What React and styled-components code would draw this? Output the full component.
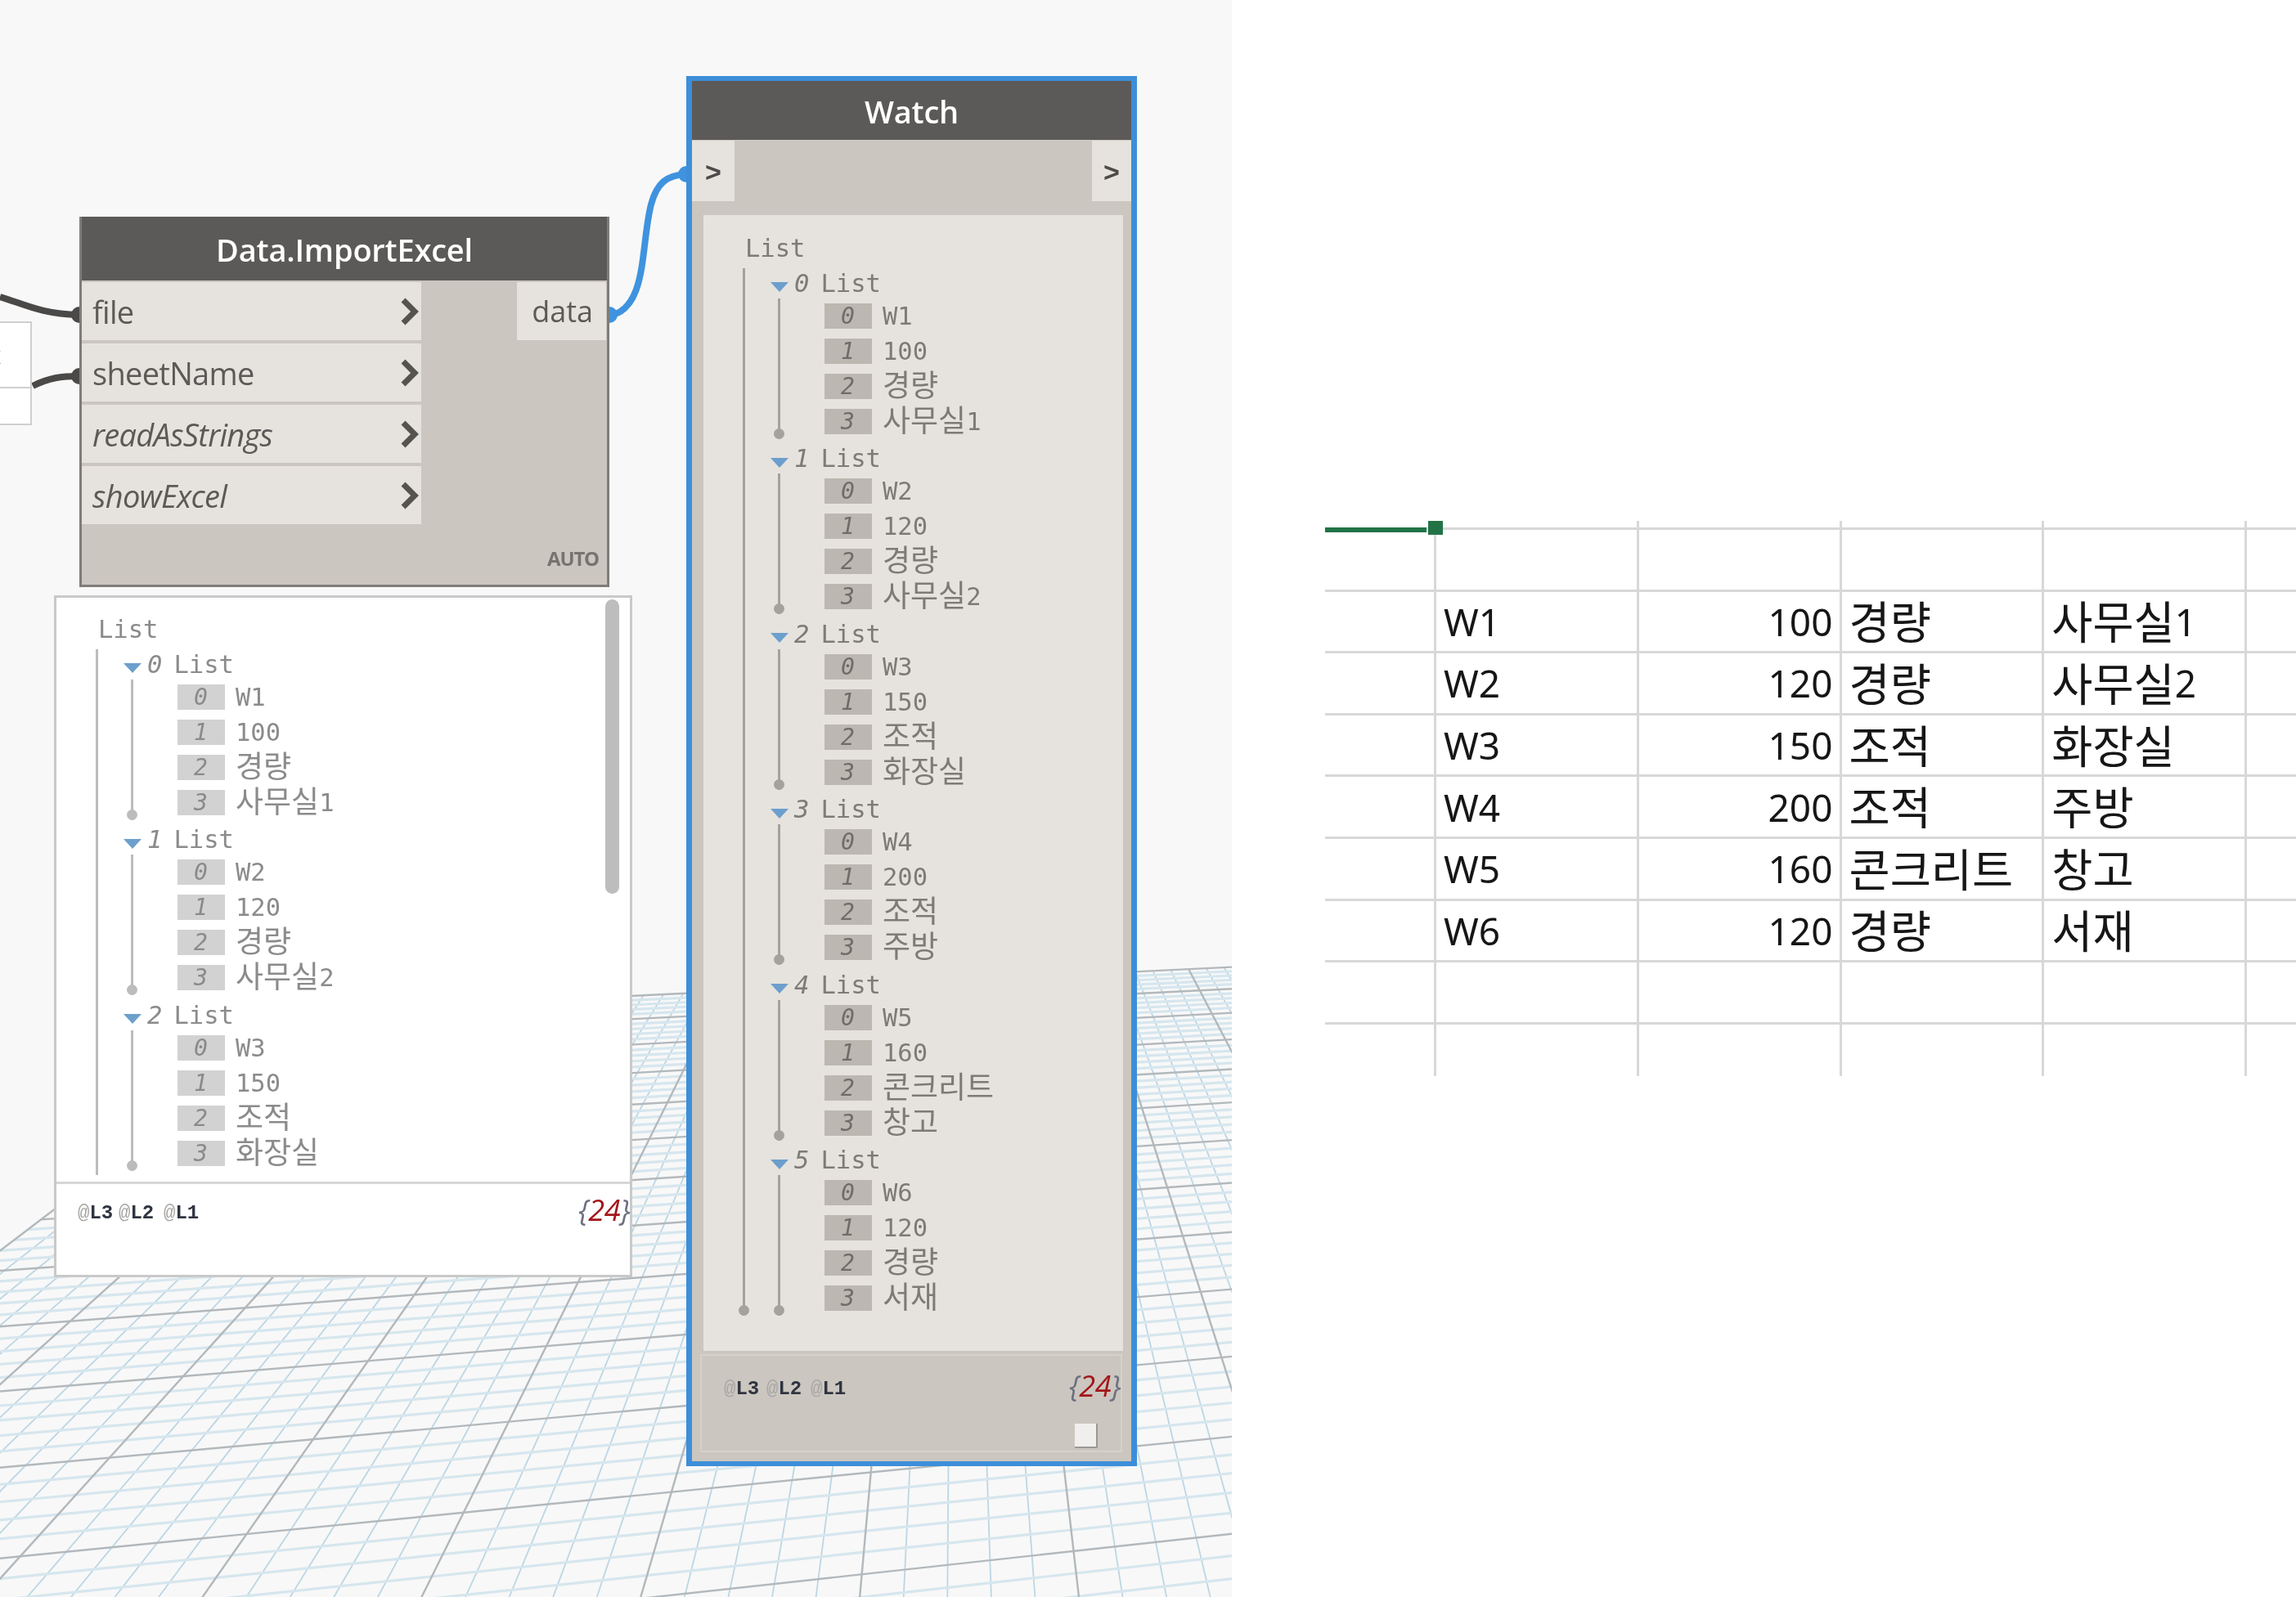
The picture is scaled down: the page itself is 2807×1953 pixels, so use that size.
import React from 'react';
import styled, { createGlobalStyle } from 'styled-components';

const GlobalStyle = createGlobalStyle`
  html, body {
    margin: 0;
    padding: 0;
    background: #ffffff;
  }
`

const RECORDS = [
  ['W1', '100', '경량', '사무실1'],
  ['W2', '120', '경량', '사무실2'],
  ['W3', '150', '조적', '화장실'],
  ['W4', '200', '조적', '주방'],
  ['W5', '160', '콘크리트', '창고'],
  ['W6', '120', '경량', '서재'],
];

// perspective of the Dynamo background grid
const VP_X = 1168;
const HORIZON = 640;
const VP2_X = 12800;

function gridPoint(k, depth) {
  const u = depth * (1 - VP_X / VP2_X) / (1 + k * depth / VP2_X);
  return [VP_X + k * u, HORIZON + u];
}

function buildGridLines() {
  const lines = [];
  for (let j = 0; j <= 50; j++) {
    const k = -1.313 + 0.0408 * j;
    const a = gridPoint(k, 616);
    const b = gridPoint(k, 1800);
    lines.push({ a, b, major: j % 5 === 0, along: true });
  }
  for (let i = -30; i <= 40; i++) {
    const depth = 1 / (0.001018 + 0.0000152 * i);
    const a = gridPoint(-1.313, depth);
    const b = gridPoint(1.3, depth);
    lines.push({ a, b, major: i % 5 === 0, along: false });
  }
  return lines;
}

const GRID_LINES = buildGridLines();

function splitHangul(text) {
  return text.match(/[\uac00-\ud7a3]+|[^\uac00-\ud7a3]+/g).map(part => ({
    text: part,
    hangul: /[\uac00-\ud7a3]/.test(part),
  }));
}

const Page = styled.div`
  display: flex;
  width: 2807px;
  height: 1953px;
  overflow: hidden;
  background: #ffffff;
  filter: blur(0.6px);
`
const Canvas = styled.div`
  position: relative;
  flex: 0 0 1506px;
  height: 1953px;
  overflow: hidden;
  background: #f8f8f8;
`
const Backdrop = styled.svg`
  position: absolute;
  left: 0;
  top: 0;
`

const InputStub = styled.div`
  position: absolute;
  left: -3px;
  top: ${p => p.$top}px;
  width: 42px;
  height: ${p => p.$height}px;
  box-sizing: border-box;
  background: #ffffff;
  border: 2px solid #cfcfcf;
  font: 30px "Open Sans", sans-serif;
  line-height: 78px;
  color: #8fa4b8;
  text-indent: -13px;
  overflow: hidden;
`

const ImportNode = styled.div`
  position: absolute;
  left: 97px;
  top: 265px;
  width: 648px;
  height: 453px;
  box-sizing: border-box;
  display: flex;
  flex-direction: column;
  background: #cbc6bf;
  border: solid #7f7c79;
  border-width: 0 3px 3px 3px;
`
const NodeHeader = styled.div`
  flex: 0 0 ${p => p.$height}px;
  box-sizing: border-box;
  padding-top: 2px;
  display: flex;
  align-items: center;
  justify-content: center;
  background: #5c5a58;
  color: #ffffff;
  font: 600 38px "Open Sans", sans-serif;
  letter-spacing: -0.2px;
`
const PortArea = styled.div`
  display: flex;
  justify-content: space-between;
  padding: 2px 0 0 0;
`
const InputList = styled.div`
  width: 415px;
  display: flex;
  flex-direction: column;
  gap: 4px;
`
const InputRow = styled.div`
  height: 71px;
  display: flex;
  align-items: center;
  justify-content: space-between;
  padding: 0 1px 0 13px;
  background: #e6e3de;
  color: #5b5a58;
  font: ${p => (p.$optional ? 'italic' : 'normal')} 38px "Open Sans", sans-serif;
  letter-spacing: -0.7px;
`
const OutputPill = styled.div`
  width: 109px;
  height: 71px;
  box-sizing: border-box;
  display: flex;
  align-items: center;
  justify-content: flex-end;
  margin-right: 1px;
  padding-right: 16px;
  background: #e6e3de;
  color: #5b5a58;
  font: 36px "Open Sans", sans-serif;
`
const AutoLabel = styled.div`
  align-self: flex-end;
  margin: 25px 10px 0 0;
  color: #77736f;
  font: 700 24px "Open Sans", sans-serif;
  letter-spacing: -1.2px;
`

const WatchNode = styled.div`
  position: absolute;
  left: 839px;
  top: 93px;
  width: 551px;
  height: 1700px;
  box-sizing: border-box;
  display: flex;
  flex-direction: column;
  background: #cbc6bf;
  border: 7px solid #3d8ed9;
  border-top-width: 6px;
  border-bottom-width: 6px;
`
const WatchPorts = styled.div`
  display: flex;
  justify-content: space-between;
  margin-top: 1px;
`
const PortTab = styled.div`
  width: ${p => p.$width}px;
  height: 74px;
  box-sizing: border-box;
  padding-top: 8px;
  display: flex;
  align-items: center;
  justify-content: center;
  background: #e6e3de;
  color: #4d4b49;
  font: 600 34px "Liberation Mono", monospace;
`
const WatchPanel = styled.div`
  margin: 17px 10px 0 14px;
  flex: 0 0 1389px;
  box-sizing: border-box;
  padding: 22px 0 0 48px;
  background: #e6e3de;
`
const WatchFooter = styled.div`
  flex: 1;
  margin: 4px 11px 11px 10px;
  box-sizing: border-box;
  display: flex;
  flex-direction: column;
  border: 2px solid #d6d2cb;
`
const ToggleBox = styled.div`
  align-self: flex-end;
  width: 28px;
  height: 30px;
  margin: 20px 28px 0 0;
  background: #f0efed;
  border-right: 2px solid #9a9894;
  border-bottom: 2px solid #9a9894;
  box-sizing: border-box;
`

const PreviewBubble = styled.div`
  position: absolute;
  left: 66px;
  top: 728px;
  width: 707px;
  height: 834px;
  box-sizing: border-box;
  display: flex;
  flex-direction: column;
  background: #ffffff;
  border: 3px solid #c9c9c9;
`
const PreviewScroller = styled.div`
  position: relative;
  height: 706px;
  margin-bottom: 8px;
  overflow: hidden;
  box-sizing: border-box;
  padding: 20px 0 0 48px;
`
const ScrollThumb = styled.div`
  position: absolute;
  left: 671px;
  top: 2px;
  width: 17px;
  height: 360px;
  border-radius: 9px;
  background: #bdbdbd;
`
const PreviewFooter = styled.div`
  flex: 1;
  border-top: 3px solid #d6d6d6;
`

const SummaryRow = styled.div`
  display: flex;
  align-items: center;
  justify-content: space-between;
  height: 46px;
  margin-top: ${p => p.$top}px;
  padding: 0 0 0 ${p => p.$left}px;
`
const Levels = styled.div`
  display: flex;
`
const Level = styled.span`
  width: ${p => p.$width}px;
  font: 700 24px "Liberation Mono", monospace;
  color: #2f3440;
`
const LevelAt = styled.span`
  font-weight: 400;
  color: #a9a7a5;
`
const Count = styled.span`
  font: italic 36px "Open Sans", sans-serif;
  color: #6d7180;
  letter-spacing: -0.5px;
  position: relative;
  top: -4px;
`
const CountValue = styled.span`
  color: #a3161a;
`

const RootLabel = styled.div`
  height: 38px;
  margin-left: 3px;
  font: 30.5px/38px "DejaVu Sans Mono", monospace;
  color: ${p => p.$ink};
`
const Branch = styled.div`
  position: relative;
  border-left: 3px solid ${p => p.$line};
  box-sizing: border-box;
  padding-bottom: ${p => (p.$open ? 5 : 0)}px;
  &::after {
    content: "";
    display: ${p => (p.$open ? 'none' : 'block')};
    position: absolute;
    left: -8px;
    bottom: 0;
    width: 13px;
    height: 13px;
    border-radius: 50%;
    background: ${p => p.$line};
  }
`
const Group = styled.div`
  margin: 4.5px 0 0 0;
  & + & {
    margin-top: 5.5px;
  }
`
const GroupHead = styled.div`
  height: 37px;
  display: flex;
  align-items: center;
  padding-left: 31px;
  font: 30.5px/37px "DejaVu Sans Mono", monospace;
  color: ${p => p.$ink};
`
const Caret = styled.span`
  width: 0;
  height: 0;
  margin: 10px 7px 0 0;
  border-left: 11.5px solid transparent;
  border-right: 11.5px solid transparent;
  border-top: 12px solid #6d9fcd;
`
const GroupIndex = styled.span`
  width: 32.5px;
  font-style: italic;
`
const ItemList = styled(Branch)`
  margin-left: 39.5px;
  padding-left: 54px;
`
const Item = styled.div`
  height: 43px;
  display: flex;
  align-items: center;
  font: 30.5px/43px "DejaVu Sans Mono", monospace;
  color: ${p => p.$ink};
`
const ItemIndex = styled.span`
  width: 58px;
  height: 31px;
  margin-right: 13.5px;
  display: flex;
  align-items: center;
  justify-content: center;
  background: ${p => p.$fill};
  font-style: italic;
  font-size: 28px;
  color: ${p => p.$ink};
`
const TreeHangul = styled.span`
  font: 37px/43px "Noto Sans CJK KR", sans-serif;
  position: relative;
  top: -3px;
`

const Sheet = styled.div`
  position: relative;
  flex: 1;
  padding: 637px 0 0 114px;
`
const SheetGrid = styled.div`
  display: grid;
  grid-template-columns: 136px repeat(4, 247.75px) 1fr;
  grid-template-rows: 11px repeat(8, 75.6px) 63px;
`
const Cell = styled.div`
  box-sizing: border-box;
  display: flex;
  align-items: center;
  justify-content: ${p => (p.$numeric ? 'flex-end' : 'flex-start')};
  padding: 0 8px 0 9px;
  border-right: ${p => (p.$lastCol ? 'none' : '3px solid #d8d8d8')};
  border-bottom: ${p => (p.$lastRow ? 'none' : '3px solid #d8d8d8')};
  color: #161616;
  font: 46px "Noto Sans", sans-serif;
  white-space: nowrap;
`
const CellHangul = styled.span`
  font: 54.5px "Noto Sans CJK KR", sans-serif;
  position: relative;
  top: -2px;
`
const SelectionEdge = styled.div`
  position: absolute;
  left: 114px;
  top: 645px;
  width: 124px;
  height: 6px;
  background: #217346;
`
const SelectionHandle = styled.div`
  position: absolute;
  left: 240px;
  top: 637px;
  width: 18px;
  height: 17px;
  background: #217346;
`

function ChevronMark() {
  return (
    <svg width="26" height="34" viewBox="0 0 26 34">
      <polyline points="5,3 19,17 5,31" fill="none" stroke="#55534f" strokeWidth="7" />
    </svg>
  );
}

function GridBackdrop() {
  return (
    <Backdrop width="1506" height="1953" viewBox="0 0 1506 1953">
      {GRID_LINES.filter(l => !l.major).map((l, i) => (
        <line
          key={i}
          x1={l.a[0]} y1={l.a[1]} x2={l.b[0]} y2={l.b[1]}
          stroke={l.along ? '#bcd6e4' : '#d6e6ee'}
          strokeWidth={l.along ? 1.8 : 3.2}
        />
      ))}
      {GRID_LINES.filter(l => l.major).map((l, i) => (
        <line
          key={i}
          x1={l.a[0]} y1={l.a[1]} x2={l.b[0]} y2={l.b[1]}
          stroke="#b2b8bc"
          strokeWidth="2.4"
        />
      ))}
      <path d="M0,363 C30,372 50,384 97,385" fill="none" stroke="#4a4947" strokeWidth="8" />
      <path d="M40,472 C60,462 75,460 97,460" fill="none" stroke="#4a4947" strokeWidth="8" />
      <circle cx="97" cy="385" r="10" fill="#4a4947" />
      <circle cx="97" cy="460" r="10" fill="#4a4947" />
      <path d="M745,386 C792,378 783,300 796,250 C803,224 815,214 839,213" fill="none" stroke="#3f93de" strokeWidth="8" />
      <circle cx="745" cy="385" r="10" fill="#3f93de" />
      <circle cx="839" cy="213" r="10" fill="#3f93de" />
    </Backdrop>
  );
}

function ValueText({ text }) {
  return splitHangul(text).map((part, i) => (
    part.hangul ? <TreeHangul key={i}>{part.text}</TreeHangul> : <span key={i}>{part.text}</span>
  ));
}

function ListTree({ tone, records, open }) {
  return (
    <>
      <RootLabel $ink={tone.ink}>List</RootLabel>
      <Branch $line={tone.line} $open={open}>
        {records.map((record, g) => (
          <Group key={g}>
            <GroupHead $ink={tone.ink}>
              <Caret />
              <GroupIndex>{g}</GroupIndex>
              List
            </GroupHead>
            <ItemList $line={tone.line}>
              {record.map((value, i) => (
                <Item key={i} $ink={tone.ink}>
                  <ItemIndex $fill={tone.fill} $ink={tone.index}>{i}</ItemIndex>
                  <ValueText text={value} />
                </Item>
              ))}
            </ItemList>
          </Group>
        ))}
      </Branch>
    </>
  );
}

function Summary({ top, left, gaps }) {
  return (
    <SummaryRow $top={top} $left={left}>
      <Levels>
        <Level $width={gaps[0]}><LevelAt>@</LevelAt>L3</Level>
        <Level $width={gaps[1]}><LevelAt>@</LevelAt>L2</Level>
        <Level $width={48}><LevelAt>@</LevelAt>L1</Level>
      </Levels>
      <Count>{'{'}<CountValue>24</CountValue>{'}'}</Count>
    </SummaryRow>
  );
}

function SheetCell({ text, numeric, lastCol, lastRow }) {
  return (
    <Cell $numeric={numeric} $lastCol={lastCol} $lastRow={lastRow}>
      {text && splitHangul(text).map((part, i) => (
        part.hangul ? <CellHangul key={i}>{part.text}</CellHangul> : <span key={i}>{part.text}</span>
      ))}
    </Cell>
  );
}

function SheetTable() {
  const rows = [[], [], ...RECORDS, [], []];
  return (
    <SheetGrid>
      {rows.map((record, r) =>
        ['', ...record.concat(['', '', '', '', '']).slice(0, 4), ''].map((text, c) => (
          <SheetCell
            key={`${r}-${c}`}
            text={text}
            numeric={c === 2}
            lastCol={c === 5}
            lastRow={r === rows.length - 1}
          />
        ))
      )}
    </SheetGrid>
  );
}

const WATCH_TONE = { ink: '#7e7b77', line: '#a5a29d', fill: '#bcb8b1', index: '#6f6d69' };
const PREVIEW_TONE = { ink: '#8b8b8b', line: '#bcbcbc', fill: '#d2d2d2', index: '#8a8a8a' };

function App() {
  return (
    <Page>
      <GlobalStyle />
      <Canvas>
        <GridBackdrop />
        <InputStub $top={393} $height={82}>x</InputStub>
        <InputStub $top={473} $height={47} />

        <ImportNode>
          <NodeHeader $height={78}>Data.ImportExcel</NodeHeader>
          <PortArea>
            <InputList>
              <InputRow>file<ChevronMark /></InputRow>
              <InputRow>sheetName<ChevronMark /></InputRow>
              <InputRow $optional>readAsStrings<ChevronMark /></InputRow>
              <InputRow $optional>showExcel<ChevronMark /></InputRow>
            </InputList>
            <OutputPill>data</OutputPill>
          </PortArea>
          <AutoLabel>AUTO</AutoLabel>
        </ImportNode>

        <PreviewBubble>
          <PreviewScroller>
            <ListTree tone={PREVIEW_TONE} records={RECORDS.slice(0, 3)} open />
            <ScrollThumb />
          </PreviewScroller>
          <PreviewFooter>
            <Summary top={12} left={26} gaps={[50, 55]} />
          </PreviewFooter>
        </PreviewBubble>

        <WatchNode>
          <NodeHeader $height={72}>Watch</NodeHeader>
          <WatchPorts>
            <PortTab $width={52}>&gt;</PortTab>
            <PortTab $width={48}>&gt;</PortTab>
          </WatchPorts>
          <WatchPanel>
            <ListTree tone={WATCH_TONE} records={RECORDS} />
          </WatchPanel>
          <WatchFooter>
            <Summary top={17} left={27} gaps={[52, 54]} />
            <ToggleBox />
          </WatchFooter>
        </WatchNode>
      </Canvas>

      <Sheet>
        <SheetTable />
        <SelectionEdge />
        <SelectionHandle />
      </Sheet>
    </Page>
  );
}

export default App;
